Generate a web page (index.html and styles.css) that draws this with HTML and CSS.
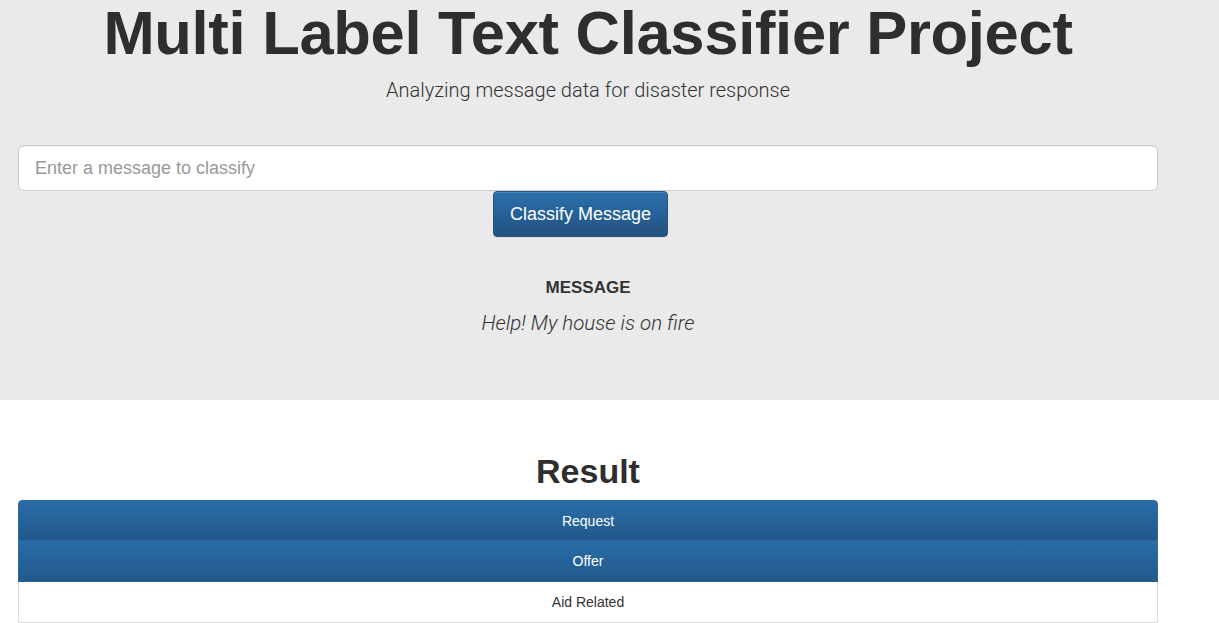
FILE: index.html
```html
<!DOCTYPE html>
<html lang="en">
<head>
<meta charset="utf-8">
<title>Disasters</title>
<link rel="stylesheet" href="styles.css">
</head>
<body>
<div class="jumbotron">
  <div class="container">
    <h1 class="title">Multi Label Text Classifier Project</h1>
    <p class="lead">Analyzing message data for disaster response</p>
    <form class="form">
      <input class="input" type="text" placeholder="Enter a message to classify">
      <div class="actions">
        <button type="button" class="btn">Classify Message</button>
      </div>
    </form>
    <div class="message">
      <h4 class="message-label">MESSAGE</h4>
      <p class="message-text">Help! My house is on fire</p>
    </div>
  </div>
</div>
<div class="container">
  <h2 class="result-title">Result</h2>
  <ul class="list-group">
    <li class="list-item active">Request</li>
    <li class="list-item active">Offer</li>
    <li class="list-item">Aid Related</li>
  </ul>
</div>
</body>
</html>
```
FILE: styles.css
```css
* { box-sizing: border-box; }
html, body { margin: 0; padding: 0; }
body {
  font-family: "Liberation Sans", Arial, sans-serif;
  color: #333;
  background: #fff;
  font-size: 14px;
  line-height: 1.42857;
}
.container {
  width: 1170px;
  margin-left: 3px;
  padding: 0 15px;
}
.jumbotron {
  background: #eaeaea;
  height: 400px;
}
.title {
  margin: 0;
  font-size: 61.5px;
  line-height: 66px;
  font-weight: bold;
  text-align: center;
  color: #2e2e2e;
  letter-spacing: -0.3px;
}
.lead {
  margin: 9px 0 0;
  font-family: Roboto, "Liberation Sans", sans-serif;
  font-weight: 300;
  font-size: 20px;
  line-height: 30px;
  text-align: center;
  color: #333;
}
.form { margin-top: 40px; }
.input {
  display: block;
  width: 100%;
  height: 46px;
  padding: 10px 16px;
  font-family: "Liberation Sans", Arial, sans-serif;
  font-size: 18px;
  border: 1px solid #ccc;
  border-radius: 6px;
  background: #fff;
  color: #555;
  box-shadow: inset 0 1px 1px rgba(0,0,0,.075);
}
.input::placeholder { color: #999; }
.actions { text-align: center; padding-right: 15px; }
.btn {
  width: 175px;
  height: 46px;
  padding: 0;
  font-family: "Liberation Sans", Arial, sans-serif;
  font-size: 18px;
  color: #fff;
  border: 1px solid #245580;
  border-radius: 4px;
  background: linear-gradient(#2b6fae 0%, #22527f 100%);
  box-shadow: inset 0 1px 0 rgba(255,255,255,.15), 0 1px 1px rgba(0,0,0,.075);
}
.message { text-align: center; margin-top: 41px; }
.message-label {
  margin: 0;
  font-size: 17px;
  line-height: 20px;
  font-weight: bold;
  color: #333;
}
.message-text {
  margin: 13px 0 0;
  font-family: Roboto, "Liberation Sans", sans-serif;
  font-weight: 300;
  font-style: italic;
  font-size: 20.5px;
  line-height: 24px;
  color: #333;
}
.result-title {
  margin: 50px 0 0;
  text-align: center;
  font-size: 34px;
  line-height: 40px;
  font-weight: bold;
  color: #2e2e2e;
  height: 50px;
  padding-top: 1px;
}
.list-group {
  list-style: none;
  margin: 0;
  padding: 0;
}
.list-item {
  height: 41px;
  line-height: 40px;
  text-align: center;
  font-size: 14px;
  border: 1px solid #ddd;
  border-top: none;
  background: #fff;
  color: #333;
}
.list-item:first-child {
  border-top-left-radius: 4px;
  border-top-right-radius: 4px;
  border-top: 1px solid #2b669a;
}
.list-item.active {
  color: #fff;
  border-color: #2b669a;
  background: linear-gradient(#2a6ca8 0%, #22598a 100%);
}
```
